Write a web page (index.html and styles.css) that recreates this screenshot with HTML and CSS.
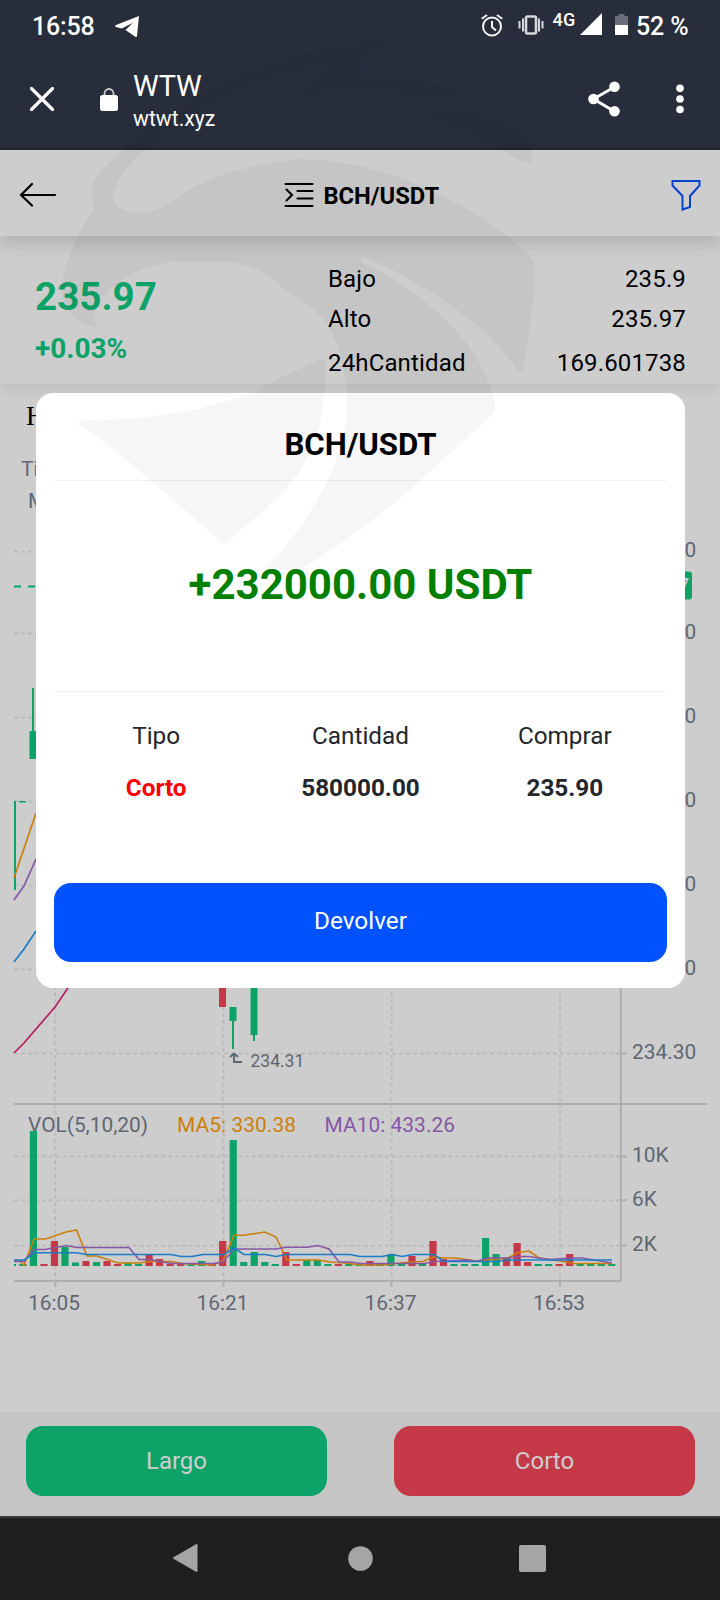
FILE: index.html
```html
<!DOCTYPE html>
<html lang="es">
<head>
<meta charset="utf-8">
<title>WTW</title>
<link rel="stylesheet" href="styles.css">
</head>
<body>
<div class="screen">
  <header class="browser">
    <div class="status">
      <span class="clock">16:58</span>
      <svg class="telegram" width="25" height="22" viewBox="0 0 25 22"><path d="M24 0 22 20Q21.800 21.600 20.300 20.800L10.500 14 18 6.800 6.800 12.500 1 11Q-.8 10 1 9Z" fill="#fff"/></svg>
      <svg class="alarm" width="22" height="23" viewBox="0 0 22 23" fill="none" stroke="#f4f4f6" stroke-width="2"><circle cx="11" cy="12.500" r="9"/><path d="M11 7v6l4 3.500M.8 4.700 6 1M21.200 4.700 16 1"/></svg>
      <svg class="vibrate" width="26" height="20" viewBox="0 0 26 20" fill="none" stroke="#d5d7db" stroke-width="2"><rect x="8" y="1.500" width="10" height="17" rx="1.500" stroke-width="2.600"/><path d="M5 3.500v13M21 3.500v13M1.500 6v7.500M24.500 6v7.500"/></svg>
      <span class="net">4G</span>
      <svg class="signal" width="22" height="22" viewBox="0 0 22 22"><path d="M22 0v22H0z" fill="#fff"/></svg>
      <svg class="battery" width="13" height="21" viewBox="0 0 13 21"><path d="M3.500 0h6v2H13v9H0V2h3.500z" fill="#696e78"/><path d="M0 11h13v10H0z" fill="#fff"/></svg>
      <span class="pct">52 %</span>
    </div>
    <div class="toolbar">
      <svg class="close" width="24" height="24" viewBox="0 0 24 24"><path d="m1.500 1.500 21 21m0-21-21 21" stroke="#fff" stroke-width="3.200" stroke-linecap="round"/></svg>
      <svg class="lock" width="18" height="23" viewBox="0 0 18 23"><path d="M4.500 8V5.500a4.500 4.500 0 0 1 9 0V8" fill="none" stroke="#c9cbd0" stroke-width="1.800"/><rect y="7" width="18" height="16" rx="2.500" fill="#fff"/></svg>
      <div class="site"><div class="site-name">WTW</div><div class="site-url">wtwt.xyz</div></div>
      <svg class="share" width="32" height="36" viewBox="0 0 32 36" fill="#fff"><path d="M26.500 6 5.500 18l21 12.500" fill="none" stroke="#fff" stroke-width="3"/><circle cx="5.500" cy="18" r="5.300"/><circle cx="26.500" cy="5.700" r="5.300"/><circle cx="26.500" cy="30.300" r="5.300"/></svg>
      <svg class="more" width="8" height="30" viewBox="0 0 8 30" fill="#fff"><circle cx="4" cy="4.300" r="3.800"/><circle cx="4" cy="15" r="3.800"/><circle cx="4" cy="25.500" r="3.800"/></svg>
    </div>
  </header>

  <nav class="pair-bar">
    <svg class="back" width="38" height="26" viewBox="0 0 38 26" fill="none" stroke="#000" stroke-width="2.200" stroke-linecap="round"><path d="M13 2 2 13l11 10.500M2 13h34"/></svg>
    <div class="pair">
      <svg width="30" height="26" viewBox="0 0 30 26" fill="none" stroke="#000" stroke-width="2.100" stroke-linecap="round"><path d="M1.500 2h27M13.500 9h15M13.500 16.500h15M1.500 24h27M2.500 7.500 8 13l-5.500 5.500"/></svg>
      <span>BCH/USDT</span>
    </div>
    <svg class="filter" width="30" height="32" viewBox="0 0 30 32"><path d="M1.500 2h27v4.500L19 17v11l-7.500 2.500V17L1.500 6.500z" fill="none" stroke="#0643cd" stroke-width="2"/></svg>
  </nav>

  <section class="stats">
    <div class="quote"><div class="price">235.97</div><div class="change">+0.03%</div></div>
    <dl class="figures">
      <div><dt>Bajo</dt><dd>235.9</dd></div>
      <div><dt>Alto</dt><dd>235.97</dd></div>
      <div class="last"><dt>24hCantidad</dt><dd>169.601738</dd></div>
    </dl>
  </section>

  <svg class="chart" width="720" height="1028" viewBox="0 384 720 1028">
    <text class="serif" x="26" y="425">H</text>
    <text x="21" y="476">Ti</text>
    <text x="28" y="508">M</text>
    <g class="grid">
      <path d="M14 551.500H620M14 633.500H620M14 717.500H620M14 801.500H620M14 885.500H620M14 969.500H620M14 1053.500H620M14 1156.500H620M14 1200.300H620M14 1245.600H620"/>
      <path d="M55.300 530V1280M223.500 530V1280M391.600 530V1280M560 530V1280"/>
    </g>
    <path class="axis" d="M14 1104H707M620.800 530V1281M14 1281H621M621 1053.500h6M621 1156.500h6M621 1200.300h6M621 1245.600h6M55.300 1281v6M223.500 1281v6M391.600 1281v6M560 1281v6"/>
    <path d="M14 586.500H620" stroke="#0da368" stroke-width="1.800" stroke-dasharray="7 7" fill="none"/>
    <g class="up"><path d="M32 688h2v44h-2zM29.500 731h7v28h-7zM14 801h2v89h-2zM19 801h7v1.500h-7zM229.500 1007h7v14h-7zM232 1020h2v29h-2zM250.500 980h7v55h-7zM253 1034h2v7h-2z"/></g>
    <path class="down" d="M219 980h7v27h-7z"/>
    <g fill="none" stroke-width="1.700">
      <path d="M14 878 36 813" stroke="#cc7f09"/>
      <path d="M14 900 24 886 36 859" stroke="#8757a8"/>
      <path d="M14 962 24 949 36 931" stroke="#1c7dc8"/>
      <path d="M14 1053 24 1043 55 1007 68 988" stroke="#b71c60"/>
      <path d="M242 1062h-8v-8m-4 3 4-3.500 4 3.500" stroke="#5f6773" stroke-width="2"/>
    </g>
    <text class="small" x="250.500" y="1066.500">234.31</text>
    <text x="28" y="1131.500" textLength="120">VOL(5,10,20)</text>
    <text x="177" y="1131.500" textLength="119" class="orange">MA5: 330.38</text>
    <text x="324.500" y="1131.500" textLength="130.500" class="violet">MA10: 433.26</text>
    <g class="labels">
      <text x="632" y="557">236.10</text><text x="632" y="639">235.80</text><text x="632" y="723">235.50</text><text x="632" y="807">235.20</text><text x="632" y="891">234.90</text><text x="632" y="975">234.60</text><text x="632" y="1058.500">234.30</text>
      <text x="632" y="1162">10K</text><text x="632" y="1206">6K</text><text x="632" y="1251">2K</text>
      <text x="28" y="1309.500">16:05</text><text x="196.500" y="1309.500">16:21</text><text x="364.500" y="1309.500">16:37</text><text x="533" y="1309.500">16:53</text>
    </g>
    <rect x="621" y="571.500" width="71" height="28" rx="3" fill="#0da368"/>
    <text x="625" y="592.500" style="fill:#d0d0d0">235.97</text>
    <g class="volume" id="volume"></g>
    <g fill="none" stroke-width="1.600">
      <path stroke="#cc7f09" d="M14 1261 20 1261 24 1265 34 1239H45.500L66 1232 76.500 1230 87 1256H97L118 1263H139L150 1261.500H171L182 1263.500 212 1265 223 1261 234 1235.300H244L265 1232 276 1237 287 1260H318L330 1262 345 1263 361 1265H383L404 1262.500 423 1261.500 433 1257 445 1258H456L477 1261 508 1258 518 1252.500 529 1251 539 1258 560 1261 574 1263.500H612"/>
      <path stroke="#8757a8" d="M14 1261.500H24L34 1249.500H45L66 1245.500 77 1247.500H129L139 1259.500H150L171 1263.500H213L223 1262 234 1249H276L286 1247.300H307L318 1245.500 329 1249 339 1262H350L361 1263.500H424L435 1261.500 466 1260 477 1261.500 487 1258 508 1258 518 1256.500H529L539 1258 550 1259.500 571 1258H582L612 1263"/>
      <path stroke="#1c7dc8" d="M14 1260H24L35 1252.800H76L87 1254.500H171L181 1256.500H192L203 1254.500H224L234 1248 244 1254.500H265L276 1256.500 286 1254.500H350L360 1256.500H382L392 1254.500 402 1256.500 413 1254.500H434L444 1261.500H497L508 1260H612"/>
    </g>
  </svg>

  <footer class="actions"><button class="long">Largo</button><button class="short">Corto</button></footer>

  <div class="android-nav">
    <svg width="26" height="30" viewBox="0 0 26 30"><path d="M24.500 2v26L2 15z" fill="#a5a5a5" stroke="#a5a5a5" stroke-width="2" stroke-linejoin="round"/></svg>
    <svg width="25" height="25" viewBox="0 0 25 25"><circle cx="12.500" cy="12.500" r="12.300" fill="#a5a5a5"/></svg>
    <svg width="27" height="27" viewBox="0 0 27 27"><rect width="27" height="27" rx="2" fill="#a5a5a5"/></svg>
  </div>

  <section class="modal">
    <h1>BCH/USDT</h1>
    <div class="amount">+232000.00 USDT</div>
    <div class="order">
      <span>Tipo</span><span>Cantidad</span><span>Comprar</span>
      <b class="red">Corto</b><b>580000.00</b><b>235.90</b>
    </div>
    <button>Devolver</button>
  </section>

  <svg class="emblem" width="720" height="600" viewBox="0 0 720 600">
    <path d="M390 38Q300 48 233 77Q170 105 132 142Q91 176 92 190L93 210Q78 232 70 255Q60 280 62 296Q68 320 99 330Q92 318 97 305Q110 284 145 268L170 262H230Q262 266 285 290Q315 308 325 322Q345 350 347 400Q348 440 325 485Q300 535 265 568L300 570Q365 530 415 485L495 412V400Q485 365 460 335Q420 290 362 262V257Q400 270 450 305Q500 340 518 373H523L535 290V262Q500 225 460 205Q380 160 300 159Q230 165 180 195Q160 212 135 213Q110 210 114 190Q124 167 145 150Q175 118 230 94Q290 70 326 65Q305 86 293 99Q325 91 360 90L430 97H478Q420 75 360 75L358 65L390 38Z"/>
    <path d="M397 107Q430 108 475 113Q510 118 525 135Q532 145 532 163H525Q508 155 500 148Q455 126 397 107Z"/>
    <path d="M78 424 83 420Q140 420 190 411L255 393Q270 380 325 358V390L320 425Q310 470 265 510L224 544 150 480 100 438 Z"/>
  </svg>
</div>
<script src="chart.js"></script>
</body>
</html>
```
FILE: chart.js
```js
// Volume per candle: positive values are rising bars, negative ones falling.
const volumes = [2, 2, 135, -2, -25, 19, 3.5, -5, 4, -5, -2, 3.5, 2, -12, -7, -2, -2, 2, 5, -2, -25, 126, 4, 14, 4, 2, -14, -2, 6, 6, 2, -2, 2, 2, -5, 2, 12, 2, -10, 2, -25, -7, 2, 2, 2, 28, 12, -8, -23, -4, 2, 2, -2, -12, 2, 2, 2, 2];
const layer = document.getElementById('volume');
volumes.forEach((v, i) => {
  const left = Math.max(14, 12.4 + i * 10.515 - 3.6);
  const right = 12.4 + i * 10.515 + 3.6;
  const bar = document.createElementNS('http://www.w3.org/2000/svg', 'rect');
  bar.setAttribute('x', left);
  bar.setAttribute('y', 1266 - Math.abs(v));
  bar.setAttribute('width', Math.max(0, right - left));
  bar.setAttribute('height', Math.abs(v));
  bar.setAttribute('class', v > 0 ? 'up' : 'down');
  layer.appendChild(bar);
});
```
FILE: styles.css
```css
* { box-sizing: border-box; }
body { margin: 0; font-family: Roboto, sans-serif; }
svg { display: block; flex: none; }
button { border: 0; font: 400 24px/1 Roboto, sans-serif; }
.screen { position: relative; width: 720px; height: 1600px; background: #cdcdcd; overflow: hidden; display: flex; flex-direction: column; }

.browser { height: 150px; background: #272d3a; color: #fff; border-bottom: 2px solid #222734; flex: none; }
.status { height: 52px; display: flex; align-items: flex-start; font-size: 25px; font-weight: 500; line-height: 30px; padding-left: 32px; }
.clock { margin-top: 12px; width: 82.500px; letter-spacing: -.2px; }
.telegram { margin: 15.500px 342px 0 0; }
.alarm { margin: 13.500px 15px 0 -1px; }
.vibrate { margin: 14.500px 9px 0 0; }
.net { font-size: 18px; margin-top: 5px; width: 27.500px; letter-spacing: .3px; white-space: nowrap; }
.signal { margin: 13px 13px 0 0; }
.battery { margin: 14px 8px 0 0; }
.pct { margin-top: 12px; white-space: nowrap; letter-spacing: -.1px; }
.toolbar { height: 96px; display: flex; align-items: center; padding-left: 30px; }
.close { margin: -2px 46px 0 0; }
.lock { margin: -2px 15px 0 0; }
.site { width: 456px; margin-top: 4px; }
.site-name { font-size: 29px; line-height: 34px; letter-spacing: -.2px; }
.site-url { font-size: 21.200px; line-height: 32px; }
.share { margin: -2px 56px 0 -1px; }
.more { margin-top: -2px; }

.pair-bar { height: 86px; flex: none; position: relative; z-index: 1; display: flex; align-items: center; justify-content: space-between; padding: 3px 19px 0 19px; box-shadow: 0 6px 18px rgba(0,0,0,.16); background: #cdcdcd; }
.pair { display: flex; gap: 9.500px; align-items: center; font-size: 23.700px; font-weight: 700; margin-right: 5px; }
.pair span { margin-top: 2px; }

.stats { height: 148px; flex: none; position: relative; display: flex; justify-content: space-between; padding: 0 34px 0 35px; box-shadow: 0 4px 14px rgba(0,0,0,.08); }
.quote { color: #0da368; font-weight: 700; }
.price { font-size: 38.600px; line-height: 46px; margin-top: 38px; }
.change { font-size: 28px; line-height: 32px; margin-top: 13px; }
.figures { width: 358px; margin: 23px 0 0; font-size: 24px; line-height: 40px; letter-spacing: .15px; }
.figures div { display: flex; justify-content: space-between; }
.figures .last { margin-top: 4px; }
.figures dd { margin: 0; }

.chart { font-size: 20.900px; }
.chart text { fill: #5f6773; }
.chart .serif { font: 27px "Liberation Serif", serif; fill: #000; }
.chart .small { font-size: 17.500px; }
.chart .orange { fill: #cc7f09; }
.chart .violet { fill: #8757a8; }
.grid { stroke: #bbb; stroke-width: 1.800; stroke-dasharray: 4 3; fill: none; }
.axis { stroke: #aeaeae; stroke-width: 2; fill: none; }
.up { fill: #0da368; }
.down { fill: #c53848; }

.actions { height: 104px; flex: none; background: #c5c5c5; padding: 14px 25px 20px 26px; display: flex; justify-content: space-between; }
.actions button { width: 301px; height: 70px; border-radius: 17px; color: #cdcdcd; }
.long { background: #0da368; }
.short { background: #c53848; }
.android-nav { height: 84px; flex: none; background: #1f1f1f; border-top: 2px solid #3d3d3d; display: grid; grid-template-columns: 176px 171px 27px; align-items: center; padding: 0 0 2px 172px; }

.modal { position: absolute; z-index: 2; left: 36px; top: 393px; width: 649px; height: 595px; border-radius: 17px; background: #fff; padding: 0 18px; display: flex; flex-direction: column; }
.modal h1 { margin: 0; height: 88px; border-bottom: 1px solid #f1f1f1; font-size: 31.200px; line-height: 104px; text-align: center; font-weight: 700; }
.amount { height: 211px; border-bottom: 1px solid #f1f1f1; color: #008000; font-size: 42px; font-weight: 700; line-height: 208px; text-align: center; }
.order { display: grid; grid-template-columns: repeat(3, 1fr); text-align: center; font-size: 24.300px; line-height: 52px; color: #23262b; padding-top: 18px; height: 191px; align-content: start; }
.order .red { color: #f00; }
.modal button { height: 79px; border-radius: 17px; background: #0052ff; color: #fff; font-size: 24.300px; padding: 0 0 2px; }
.emblem { position: absolute; z-index: 3; left: 0; top: 0; fill: rgba(0,0,0,.036); pointer-events: none; }
```
